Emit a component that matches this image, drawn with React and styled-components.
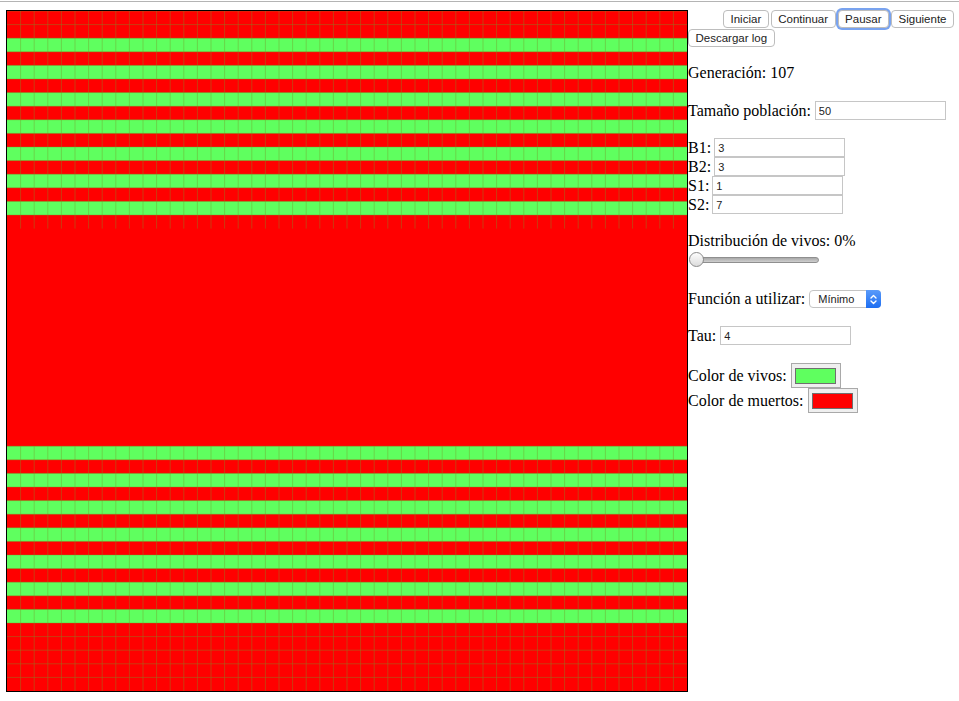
import React from "react";
import styled, { createGlobalStyle } from "styled-components";

const GlobalStyle = createGlobalStyle`
  body {
    margin: 0;
    background: #fff;
    font-family: "Liberation Serif", "Times New Roman", serif;
    font-size: 16px;
    color: #000;
  }
`

const TopRule = styled.div`
  height: 1px;
  margin-top: 1px;
  background: #b4b4b4;
`

const Main = styled.div`
  display: flex;
  align-items: flex-start;
  padding-left: 6px;
  margin-top: 8px;
`

const Board = styled.svg`
  display: block;
  border: 1px solid #000;
  flex-shrink: 0;
`

const Panel = styled.div`
  flex: 1;
  padding-right: 5px;
`

const ButtonRow = styled.div`
  display: flex;
  justify-content: ${props => (props.right ? "flex-end" : "flex-start")};
  gap: 2px;
  margin-top: ${props => props.top || 0}px;
`

const Button = styled.button`
  height: 18px;
  padding: 0 6.5px;
  border: 1px solid #bdbdbd;
  border-radius: 4px;
  background: #fff;
  font-family: "Liberation Sans", Arial, sans-serif;
  font-size: 11.5px;
  color: #222;
  line-height: 16px;
  box-shadow: ${props => (props.focused ? "0 0 0 2px #79a3ef" : "none")};
`

const Line = styled.div`
  display: flex;
  align-items: center;
  height: ${props => props.h || 18}px;
  margin-top: ${props => props.top || 0}px;
  white-space: nowrap;
`

const Label = styled.span`
  margin-right: ${props => props.gap || 4}px;
`

const TextInput = styled.input`
  box-sizing: border-box;
  width: 131px;
  height: 19px;
  padding: 0 3px;
  border: 1px solid #c6c6c6;
  font-family: "Liberation Sans", Arial, sans-serif;
  font-size: 11px;
  color: #222;
  outline: none;
`

const Slider = styled.div`
  position: relative;
  width: 130px;
  height: 15px;
  margin-left: 1px;
`

const Track = styled.div`
  position: absolute;
  left: 2px;
  right: 0;
  top: 5px;
  height: 4px;
  border: 1px solid #8f8f8f;
  border-radius: 3px;
  background: linear-gradient(#a9a9a9, #cfcfcf);
`

const Thumb = styled.div`
  position: absolute;
  left: 0;
  top: 0;
  width: 13px;
  height: 13px;
  border: 1px solid #8a8a8a;
  border-radius: 50%;
  background: linear-gradient(#fdfdfd, #dcdcdc);
`

const Select = styled.div`
  position: relative;
  box-sizing: border-box;
  width: 72px;
  height: 18px;
  border: 1px solid #c4c4c4;
  border-radius: 4px;
  background: #fff;
  font-family: "Liberation Sans", Arial, sans-serif;
  font-size: 11px;
  color: #222;
  line-height: 16px;
  padding-left: 8px;
`

const SelectArrow = styled.div`
  position: absolute;
  top: -1px;
  right: -1px;
  width: 15px;
  height: 18px;
  border-radius: 0 4px 4px 0;
  background: linear-gradient(#5a9bfa, #1d6ef2);
  display: flex;
  align-items: center;
  justify-content: center;
`

const ColorWell = styled.div`
  box-sizing: border-box;
  width: 50px;
  height: 25px;
  border: 1px solid #a9a9a9;
  background: #efefef;
  display: flex;
  align-items: center;
  justify-content: center;
`

const Swatch = styled.div`
  box-sizing: border-box;
  width: 41px;
  height: 16px;
  border: 1px solid #6f6f6f;
  background: ${props => props.color};
`

const SIZE = 50
const CELL = 680 / SIZE
const ALIVE = "#5fff5f"
const DEAD = "#ff0000"

const aliveRows = [2, 4, 6, 8, 10, 12, 14, 32, 34, 36, 38, 40, 42, 44]
const drawnRows = r => r <= 15 || r >= 32

function Grid() {
  const rows = []
  const lines = []
  for (let r = 0; r < SIZE; r++) {
    const y = r * CELL
    if (aliveRows.includes(r)) {
      rows.push(<rect key={"r" + r} x={0} y={y} width={680} height={CELL} fill={ALIVE} />)
    }
    if (drawnRows(r)) {
      let d = `M0 ${y} H680 `
      for (let c = 1; c < SIZE; c++) {
        d += `M${c * CELL} ${y} V${y + CELL} `
      }
      lines.push(<path key={"l" + r} d={d} />)
    }
  }
  return (
    <Board width={680} height={680} viewBox="0 0 680 680">
      <rect x={0} y={0} width={680} height={680} fill={DEAD} />
      {rows}
      <g stroke="rgba(120,150,40,0.4)" strokeWidth="1" fill="none">{lines}</g>
    </Board>
  )
}

const App = () => {
  return (
    <>
      <GlobalStyle />
      <TopRule />
      <Main>
        <Grid />
        <Panel>
          <ButtonRow right>
            <Button>Iniciar</Button>
            <Button>Continuar</Button>
            <Button focused>Pausar</Button>
            <Button>Siguiente</Button>
          </ButtonRow>
          <ButtonRow top={1}>
            <Button>Descargar log</Button>
          </ButtonRow>

          <Line top={17}>Generación: 107</Line>

          <Line top={19} h={19}>
            <Label>Tamaño población:</Label>
            <TextInput defaultValue="50" />
          </Line>

          <Line top={18} h={19}>
            <Label gap={3}>B1:</Label>
            <TextInput defaultValue="3" />
          </Line>
          <Line h={19}>
            <Label gap={3}>B2:</Label>
            <TextInput defaultValue="3" />
          </Line>
          <Line h={19}>
            <Label gap={3}>S1:</Label>
            <TextInput defaultValue="1" />
          </Line>
          <Line h={19}>
            <Label gap={3}>S2:</Label>
            <TextInput defaultValue="7" />
          </Line>

          <Line top={18}>Distribución de vivos: 0%</Line>
          <Line top={2} h={15}>
            <Slider>
              <Track />
              <Thumb />
            </Slider>
          </Line>

          <Line top={23}>
            <Label>Función a utilizar:</Label>
            <Select>
              Mínimo
              <SelectArrow>
                <svg width="7" height="11" viewBox="0 0 7 11" fill="none" stroke="#fff" strokeWidth="1.4" strokeLinecap="round" strokeLinejoin="round">
                  <path d="M1 4 L3.5 1.5 L6 4" />
                  <path d="M1 7 L3.5 9.5 L6 7" />
                </svg>
              </SelectArrow>
            </Select>
          </Line>

          <Line top={18} h={19}>
            <Label>Tau:</Label>
            <TextInput defaultValue="4" />
          </Line>

          <Line top={18} h={25}>
            <Label>Color de vivos:</Label>
            <ColorWell><Swatch color={ALIVE} /></ColorWell>
          </Line>
          <Line h={25}>
            <Label>Color de muertos:</Label>
            <ColorWell><Swatch color={DEAD} /></ColorWell>
          </Line>
        </Panel>
      </Main>
    </>
  )
}

export default App
